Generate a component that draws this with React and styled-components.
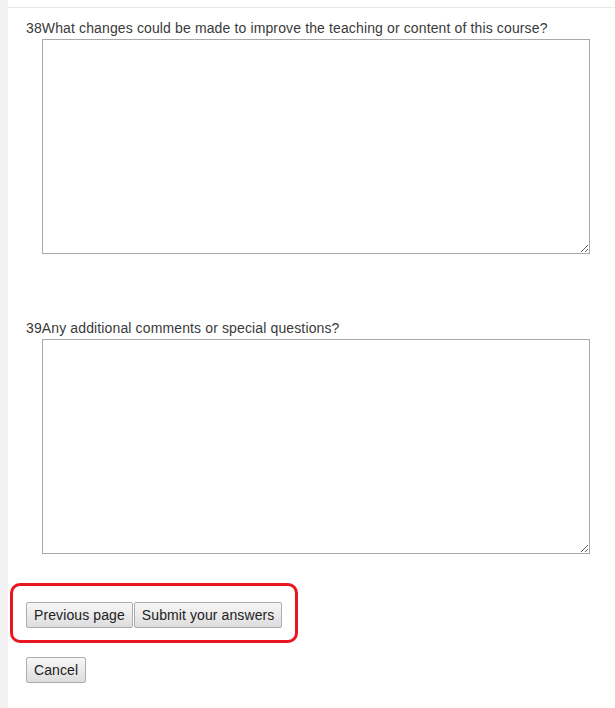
import React from "react";
import styled, { createGlobalStyle } from "styled-components";

const Global = createGlobalStyle`
  html, body { margin: 0; padding: 0; background: #fff; }
  body { font-family: "Liberation Sans", Arial, sans-serif; font-size: 14px; color: #333; }
`;

const Page = styled.div`
  display: flex;
  min-height: 708px;
`;

const Strip = styled.div`
  width: 8px;
  flex: none;
  background: #f2f2f2;
`;

const Content = styled.div`
  flex: 1;
  padding-top: 7px;
`;

const Panel = styled.div`
  border-top: 1px solid #e8e8e8;
  padding: 11px 0 24px 0;
  display: flex;
  flex-direction: column;
`;

const Question = styled.div`
  display: flex;
  flex-direction: column;
  align-items: flex-start;
  margin-top: ${(p) => p.$gap || 0}px;
`;

const Label = styled.label`
  display: block;
  line-height: 18px;
  padding-left: 18px;
  color: #3a3a3a;
  letter-spacing: 0.13px;
  margin-bottom: 2px;
`;

const Area = styled.textarea`
  margin: 0 0 0 34px;
  width: 548px;
  height: 215px;
  box-sizing: border-box;
  border: 1px solid #a9a9a9;
  border-radius: 0;
  background: #fff;
  font-family: inherit;
  font-size: 14px;
  resize: both;
  outline: none;
`;

const Highlight = styled.div`
  align-self: flex-start;
  margin: 29px 0 0 2px;
  display: flex;
  border: 3px solid #e8161e;
  border-radius: 10px;
  padding: 16px 13px 12px 13px;
`;

const Button = styled.button`
  height: 26px;
  box-sizing: border-box;
  padding: 0 ${(p) => p.$pad || 7}px;
  margin: 0;
  border: 1px solid #adadad;
  border-radius: 2px;
  background: linear-gradient(#f7f7f7, #dddddd);
  font-family: "Liberation Sans", Arial, sans-serif;
  font-size: 14px;
  letter-spacing: 0.1px;
  color: #222;
  cursor: pointer;
  & + & { margin-left: 1px; }
`;

const CancelRow = styled.div`
  display: flex;
  margin: 14px 0 0 18px;
`;

export default function App() {
  return (
    <>
      <Global />
      <Page>
        <Strip />
        <Content>
          <Panel>
            <Question>
              <Label>38What changes could be made to improve the teaching or content of this course?</Label>
              <Area />
            </Question>
            <Question $gap={65}>
              <Label>39Any additional comments or special questions?</Label>
              <Area />
            </Question>
            <Highlight>
              <Button $pad={7}>Previous page</Button>
              <Button $pad={7}>Submit your answers</Button>
            </Highlight>
            <CancelRow>
              <Button $pad={7}>Cancel</Button>
            </CancelRow>
          </Panel>
        </Content>
      </Page>
    </>
  );
}
